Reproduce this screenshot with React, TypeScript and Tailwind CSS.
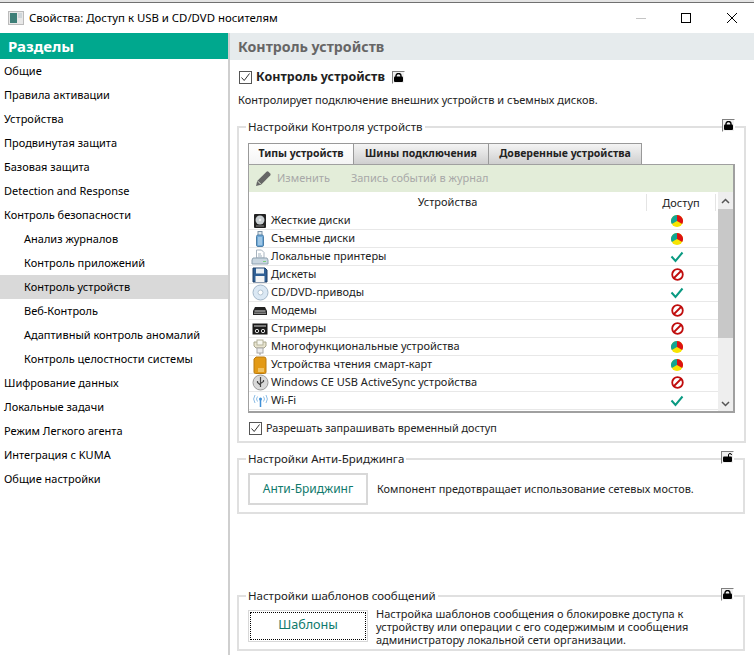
import React from 'react';

type Access = 'mixed' | 'allow' | 'deny';

const sections = [
  { label: 'Общие' },
  { label: 'Правила активации' },
  { label: 'Устройства' },
  { label: 'Продвинутая защита' },
  { label: 'Базовая защита' },
  { label: 'Detection and Response' },
  { label: 'Контроль безопасности' },
  { label: 'Анализ журналов', sub: true },
  { label: 'Контроль приложений', sub: true },
  { label: 'Контроль устройств', sub: true, active: true },
  { label: 'Веб-Контроль', sub: true },
  { label: 'Адаптивный контроль аномалий', sub: true },
  { label: 'Контроль целостности системы', sub: true },
  { label: 'Шифрование данных' },
  { label: 'Локальные задачи' },
  { label: 'Режим Легкого агента' },
  { label: 'Интеграция с KUMA' },
  { label: 'Общие настройки' },
];

const HddIcon = () => (
  <svg width="16" height="16" viewBox="0 0 16 16">
    <rect x="2" y="1" width="12" height="14" rx="1" fill="#222" />
    <circle cx="8" cy="7" r="4.5" fill="#c9cfd2" />
    <circle cx="8" cy="7" r="1.2" fill="#f2f2f2" />
    <path d="M4 13h8" stroke="#888" />
  </svg>
);

const UsbIcon = () => (
  <svg width="16" height="16" viewBox="0 0 16 16">
    <rect x="6" y="0.5" width="4" height="4" fill="#dfe8ee" stroke="#7c94a8" />
    <rect x="4.5" y="4" width="7" height="11.5" rx="1.5" fill="#6fa8d6" stroke="#4d7fa8" />
    <path d="M7 6v8M9 6v8" stroke="#cfe4f4" />
  </svg>
);

const PrinterIcon = () => (
  <svg width="18" height="16" viewBox="0 0 18 16">
    <path d="M5.500 1h5l2.500 2.500V9h-7.500z" fill="#fff" stroke="#a8b4bf" />
    <path d="M7 5h3M7 7h4" stroke="#9fb0bd" />
    <path d="M2 9h14l1 2v4H1v-4z" fill="#c9d6e0" stroke="#8ea1b0" />
    <path d="M12 12.500h3" stroke="#7ccf7c" />
  </svg>
);

const FloppyIcon = () => (
  <svg width="16" height="16" viewBox="0 0 16 16">
    <path d="M1 1h12l2 2v12H1z" fill="#2f5f94" stroke="#1f3f66" />
    <rect x="4" y="1.500" width="8" height="5" fill="#e8eef3" />
    <rect x="3.500" y="9" width="9" height="6" fill="#f5f5f5" />
  </svg>
);

const CdIcon = () => (
  <svg width="17" height="17" viewBox="0 0 17 17">
    <circle cx="8.500" cy="8.500" r="7.500" fill="#dbe8f4" stroke="#a4b8ca" />
    <circle cx="8.500" cy="8.500" r="2.500" fill="#fff" stroke="#b4c4d2" />
  </svg>
);

const ModemIcon = () => (
  <svg width="16" height="16" viewBox="0 0 16 16">
    <path d="M3 4h10l2 4v4H1V8z" fill="#222" />
    <path d="M2.500 8h11" stroke="#ddd" />
    <rect x="2" y="9.500" width="12" height="1.500" fill="#888" />
  </svg>
);

const TapeIcon = () => (
  <svg width="16" height="16" viewBox="0 0 16 16">
    <rect x="0.500" y="2.500" width="15" height="11" fill="#1a1a1a" />
    <rect x="2" y="4" width="12" height="2" fill="#777" />
    <circle cx="5" cy="10" r="1.700" fill="none" stroke="#ddd" />
    <circle cx="11" cy="10" r="1.700" fill="none" stroke="#ddd" />
  </svg>
);

const MfpIcon = () => (
  <svg width="16" height="16" viewBox="0 0 16 16">
    <path d="M2 3h12v4l-2 2H4L2 7z" fill="#e8e4cf" stroke="#a8a68c" />
    <rect x="5" y="1" width="6" height="5" fill="#f7f7f0" stroke="#b6b49c" />
    <rect x="5" y="9" width="6" height="5" fill="#ececec" stroke="#aaa" />
    <path d="M8 14v2" stroke="#999" />
  </svg>
);

const SmartCardIcon = () => (
  <svg width="14" height="18" viewBox="0 0 14 18">
    <path d="M3 1h8a2 2 0 0 1 2 2v13a1.500 1.500 0 0 1-1.500 1.500h-9A1.500 1.500 0 0 1 1 16V3z" fill="#e39a16" stroke="#b87a10" />
    <path d="M6 12v4M8 12v4M10 12v4" stroke="#ffe9a8" />
  </svg>
);

const SyncIcon = () => (
  <svg width="17" height="17" viewBox="0 0 17 17">
    <circle cx="8.500" cy="8.500" r="7.500" fill="#d9d9d9" stroke="#9a9a9a" />
    <path d="M8.500 3v10M8.500 11L5.500 8.500V7M8.500 9.500l3-2V6" stroke="#444" fill="none" strokeWidth="1.200" />
  </svg>
);

const WifiIcon = () => (
  <svg width="17" height="16" viewBox="0 0 17 16">
    <circle cx="8.500" cy="6" r="1.500" fill="#3f8fd6" />
    <path d="M8.500 7v7" stroke="#3f8fd6" strokeWidth="1.500" />
    <path d="M5.500 3.500a4 4 0 0 0 0 5M11.500 3.500a4 4 0 0 1 0 5M3 2a7 7 0 0 0 0 8M14 2a7 7 0 0 1 0 8" stroke="#8dbde6" fill="none" />
  </svg>
);

const devices: { name: string; icon: React.ReactNode; access: Access }[] = [
  { name: 'Жесткие диски', icon: <HddIcon />, access: 'mixed' },
  { name: 'Съемные диски', icon: <UsbIcon />, access: 'mixed' },
  { name: 'Локальные принтеры', icon: <PrinterIcon />, access: 'allow' },
  { name: 'Дискеты', icon: <FloppyIcon />, access: 'deny' },
  { name: 'CD/DVD-приводы', icon: <CdIcon />, access: 'allow' },
  { name: 'Модемы', icon: <ModemIcon />, access: 'deny' },
  { name: 'Стримеры', icon: <TapeIcon />, access: 'deny' },
  { name: 'Многофункциональные устройства', icon: <MfpIcon />, access: 'mixed' },
  { name: 'Устройства чтения смарт-карт', icon: <SmartCardIcon />, access: 'mixed' },
  { name: 'Windows CE USB ActiveSync устройства', icon: <SyncIcon />, access: 'deny' },
  { name: 'Wi-Fi', icon: <WifiIcon />, access: 'allow' },
];

const AccessIcon = ({ kind }: { kind: Access }) => {
  if (kind === 'allow') {
    return (
      <svg width="14" height="12" viewBox="0 0 14 12">
        <path d="M1.500 5.500L5.500 10L12.500 1.500" fill="none" stroke="#0a9a82" strokeWidth="2" />
      </svg>
    );
  }
  if (kind === 'deny') {
    return (
      <svg width="13" height="13" viewBox="0 0 13 13">
        <circle cx="6.500" cy="6.500" r="5.300" fill="none" stroke="#c00d0d" strokeWidth="1.800" />
        <path d="M10 3L3 10" stroke="#c00d0d" strokeWidth="1.800" />
      </svg>
    );
  }
  return (
    <svg width="12" height="12" viewBox="0 0 12 12">
      <circle cx="6" cy="6" r="6" fill="#f7e400" />
      <path d="M6 6L0.800 9A6 6 0 0 1 6 0z" fill="#12a594" />
      <path d="M6 6V0A6 6 0 0 1 11.200 9z" fill="#dd1212" />
    </svg>
  );
};

const LockIcon = ({ open }: { open?: boolean }) => (
  <span className="flex h-[13px] w-[13px] items-center justify-center border border-t-[#808080] border-r-white border-b-white border-l-[#808080] bg-[#f0f0f0]">
    <svg width="9" height="9" viewBox="0 0 9 9">
      <rect x="0" y="3.500" width="9" height="5.500" rx="1" fill="#000" />
      {open ? (
        <path d="M5.500 4V2a1.500 1.500 0 0 1 3 0" fill="none" stroke="#000" />
      ) : (
        <path d="M2 4V2.800a2.500 2.300 0 0 1 5 0V4" fill="none" stroke="#000" strokeWidth="1.400" />
      )}
    </svg>
  </span>
);

const Check = () => (
  <span className="flex h-[13px] w-[13px] shrink-0 items-center justify-center border border-[#555] bg-white">
    <svg width="11" height="11" viewBox="0 0 11 11">
      <path d="M1.500 5.500L4.200 8.500L9.500 1.500" fill="none" stroke="#333" />
    </svg>
  </span>
);

const Group = ({ title, open, className, children }: { title: string; open?: boolean; className: string; children: React.ReactNode }) => (
  <fieldset className={`relative ml-[7px] mr-[9px] border-2 border-[#e0e0e0] ${className}`}>
    <legend className="ml-[7px] px-[2px] text-[11.5px] leading-[14px] text-[#222]">{title}</legend>
    <div className="absolute -top-[15px] right-[9px]">
      <LockIcon open={open} />
    </div>
    {children}
  </fieldset>
);

const App = () => {
  return (
    <div className="flex h-[655px] w-[754px] flex-col overflow-hidden bg-white text-[11.5px] text-[#222] [font-family:'Noto_Sans','Open_Sans',sans-serif]">
      <div className="h-[3px] shrink-0 border-b border-b-[#707070] bg-[#e4e4e4]" />

      {/* Title bar */}
      <div className="flex h-[30px] shrink-0 items-center pl-2">
        <svg width="16" height="14" viewBox="0 0 16 14">
          <rect x="0.500" y="0.500" width="15" height="13" fill="#e8e8e8" stroke="#bbb" />
          <rect x="2" y="2" width="7" height="10" fill="#3d7f78" />
          <rect x="10" y="2" width="4" height="5" fill="#cfd6da" />
        </svg>
        <span className="ml-[5px] text-[11.4px] text-black">Свойства: Доступ к USB и CD/DVD носителям</span>
        <div className="ml-auto flex items-center pr-[17px]">
          <span className="h-px w-[10px] bg-[#c4c4c4]" />
          <span className="ml-[35px] h-[10px] w-[10px] border border-black" />
          <svg className="ml-[36px]" width="10" height="10" viewBox="0 0 10 10">
            <path d="M0 0L10 10M10 0L0 10" stroke="#000" strokeWidth="1" />
          </svg>
        </div>
      </div>

      <div className="flex min-h-0 flex-1">
        {/* Sidebar */}
        <aside className="w-[230px] shrink-0 border-r-2 border-r-[#cfcfcf]">
          <div className="flex h-[26px] items-center bg-[#00a88e] pl-2 text-[15px] font-bold text-white">Разделы</div>
          <ul>
            {sections.map((item) => (
              <li
                key={item.label}
                className={`flex h-6 items-center text-[11px] text-black ${item.sub ? 'pl-6' : 'pl-1'} ${item.active ? 'bg-[#d9d9d9]' : ''}`}
              >
                {item.label}
              </li>
            ))}
          </ul>
        </aside>

        {/* Content */}
        <main className="min-w-0 flex-1">
          <div className="flex h-[27px] items-center bg-[#e6ebed] pl-2 text-[14.200px] font-bold text-[#666]">Контроль устройств</div>

          <div className="mt-[11px] flex h-[13px] items-center pl-[9px]">
            <Check />
            <span className="ml-1 text-[12.500px] font-bold text-[#222]">Контроль устройств</span>
            <span className="ml-[7px]">
              <LockIcon />
            </span>
          </div>
          <p className="mt-[9px] pl-2 text-[11px] leading-[14px]">Контролирует подключение внешних устройств и съемных дисков.</p>

          <Group title="Настройки Контроля устройств" className="mt-[13px] h-[323px]">
            <div className="px-[9px]">
              {/* Tabs */}
              <div className="mt-[9px] flex h-[21px] text-[10.500px] font-bold">
                <div className="flex w-[105px] items-center justify-center border-t border-l border-[#999] bg-linear-to-b from-white to-[#f4f4f4]">Типы устройств</div>
                <div className="flex w-[135px] items-center justify-center border-t border-l border-[#999] bg-linear-to-b from-[#f4f4f4] to-[#cfcfcf]">Шины подключения</div>
                <div className="flex w-[154px] items-center justify-center border-x border-t border-[#999] bg-linear-to-b from-[#f4f4f4] to-[#cfcfcf]">Доверенные устройства</div>
              </div>

              {/* Device table */}
              <div className="h-[249px] w-[487px] overflow-hidden border-t border-r-2 border-b-2 border-l border-[#a0a0a0]">
                <div className="flex h-[27px] items-center bg-[#e3edd9] pl-[6px] text-[11px] text-[#a8a8a8]">
                  <svg width="17" height="17" viewBox="0 0 17 17">
                    <path d="M1 16l1.200-5L11.500 1.800a1.500 1.500 0 0 1 2 0l1.700 1.700a1.500 1.500 0 0 1 0 2L6 14.800z" fill="#666" />
                    <path d="M2.800 11.200l3 3" stroke="#e3edd9" />
                  </svg>
                  <span className="ml-[5px]">Изменить</span>
                  <span className="ml-[21px]">Запись событий в журнал</span>
                </div>

                <div className="flex">
                  <div className="w-[469px] shrink-0">
                    <div className="flex h-5 items-center text-[11px]">
                      <span className="w-[397px] text-center">Устройства</span>
                      <span className="h-[17px] w-[70px] border-x border-[#e4e4e4] text-center leading-[17px]">Доступ</span>
                    </div>
                    {devices.map((device) => (
                      <div key={device.name} className="flex h-[18px] items-center border-b border-b-[#e8e8e8] text-[11px]">
                        <span className="flex w-[22px] shrink-0 items-center justify-center">{device.icon}</span>
                        <span className="w-[375px] whitespace-nowrap">{device.name}</span>
                        <span className="flex w-[70px] justify-center pr-2">
                          <AccessIcon kind={device.access} />
                        </span>
                      </div>
                    ))}
                  </div>

                  {/* Scrollbar */}
                  <div className="flex h-[220px] w-[15px] flex-col bg-[#eeeeee]">
                    <div className="flex h-[17px] items-center justify-center">
                      <svg width="9" height="6" viewBox="0 0 9 6">
                        <path d="M1 5L4.500 1.500L8 5" fill="none" stroke="#555" strokeWidth="1.500" />
                      </svg>
                    </div>
                    <div className="h-[129px] bg-[#c8c8c8]" />
                    <div className="mt-auto flex h-[17px] items-center justify-center">
                      <svg width="9" height="6" viewBox="0 0 9 6">
                        <path d="M1 1L4.500 4.500L8 1" fill="none" stroke="#555" strokeWidth="1.500" />
                      </svg>
                    </div>
                  </div>
                </div>
              </div>

              <label className="mt-2 flex items-center pl-[1px]">
                <Check />
                <span className="ml-[4px] text-[10.800px] leading-[14px]">Разрешать запрашивать временный доступ</span>
              </label>
            </div>
          </Group>

          <Group title="Настройки Анти-Бриджинга" open className="mt-[9px] h-[62px]">
            <div className="mt-[7px] flex items-center pl-[9px]">
              <button className="h-8 w-[120px] border-2 border-[#d8d8d8] text-xs text-[#0f7a6c]">Анти-Бриджинг</button>
              <p className="ml-[9px] text-[10.900px]">Компонент предотвращает использование сетевых мостов.</p>
            </div>
          </Group>

          <Group title="Настройки шаблонов сообщений" className="mt-[75px] h-[62px]">
            <div className="mt-1 flex items-center pl-[9px]">
              <button className="mb-[2px] h-8 w-[120px] border border-[#d8d8d8] p-px text-[12.600px] text-[#0f7a6c]">
                <span className="flex h-full items-center justify-center border border-dotted border-black">Шаблоны</span>
              </button>
              <p className="ml-2 w-[330px] text-[11px] leading-[13px]">
                Настройка шаблонов сообщения о блокировке доступа к устройству или операции с его содержимым и сообщения администратору локальной сети организации.
              </p>
            </div>
          </Group>
        </main>
      </div>
    </div>
  );
};

export default App;
